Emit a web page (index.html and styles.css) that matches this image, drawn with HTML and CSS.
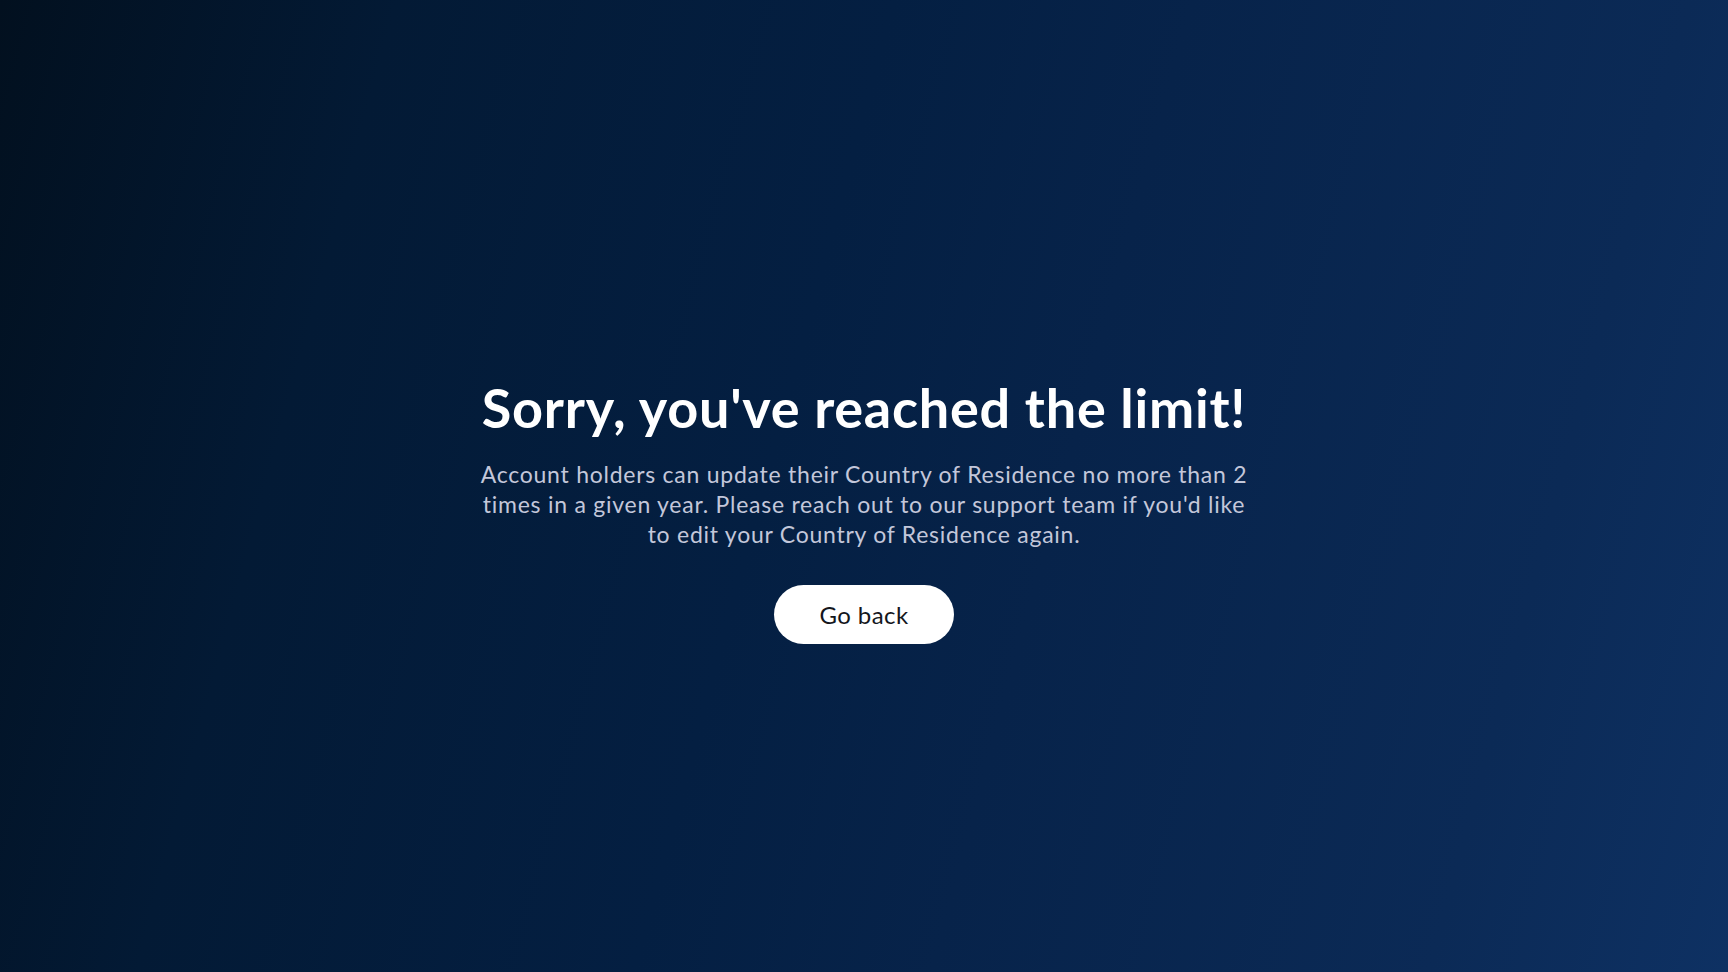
FILE: index.html
```html
<!DOCTYPE html>
<html lang="en">
<head>
<meta charset="utf-8">
<title>Limit reached</title>
<link rel="stylesheet" href="styles.css">
</head>
<body>
<main class="page">
  <section class="notice">
    <h1 class="title">Sorry, you've reached the limit!</h1>
    <p class="message">Account holders can update their Country of Residence no more than 2 times in a given year. Please reach out to our support team if you'd like to edit your Country of Residence again.</p>
    <button class="back-btn" type="button">Go back</button>
  </section>
</main>
</body>
</html>
```

FILE: styles.css
```css
html, body {
  margin: 0;
  padding: 0;
  height: 100%;
}
body {
  font-family: "Lato", "Liberation Sans", sans-serif;
  background: #041a38;
  overflow: hidden;
}
.page {
  height: 100vh;
  box-sizing: border-box;
  display: flex;
  align-items: flex-start;
  justify-content: center;
  padding-top: 377px;
  background: linear-gradient(105deg, #02101f 0%, #031a35 20%, #041f42 45%, #07234a 60%, #0b2a56 85%, #0e3163 100%);
}
.notice {
  display: flex;
  flex-direction: column;
  align-items: center;
  width: 790px;
  text-align: center;
}
.title {
  margin: 0;
  font-size: 54px;
  line-height: 62px;
  font-weight: 700;
  color: #ffffff;
  letter-spacing: 0.75px;
}
.message {
  margin: 20px 0 0;
  font-size: 23px;
  line-height: 30px;
  color: #c3c7da;
  font-weight: 400;
  letter-spacing: 0.75px;
}
.back-btn {
  margin-top: 36px;
  width: 180px;
  height: 59px;
  border: none;
  border-radius: 30px;
  background: #ffffff;
  color: #14161c;
  font-family: inherit;
  font-size: 24px;
  font-weight: 400;
  letter-spacing: 0.4px;
  cursor: pointer;
}
```
